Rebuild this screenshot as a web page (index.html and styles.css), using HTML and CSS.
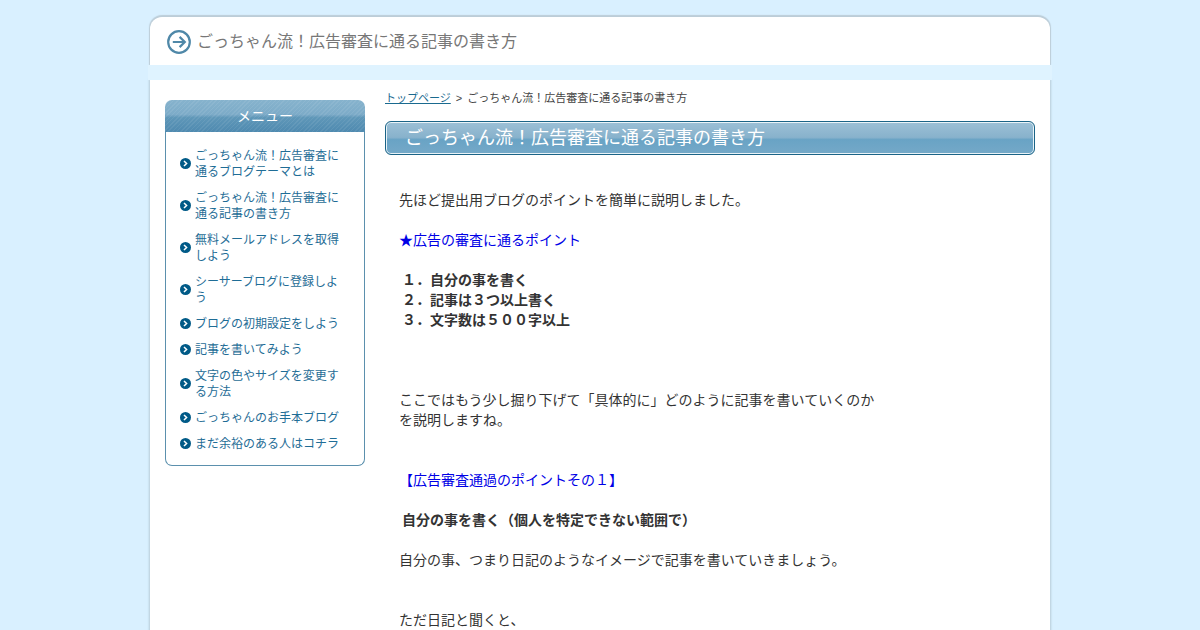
FILE: index.html
```html
<!DOCTYPE html>
<html lang="ja">
<head>
<meta charset="utf-8">
<title>ごっちゃん流！広告審査に通る記事の書き方</title>
<link rel="stylesheet" href="styles.css">
</head>
<body>
<div class="page">
  <header class="site-header">
    <svg class="header-icon" width="26" height="26" viewBox="0 0 26 26" aria-hidden="true">
      <circle cx="13" cy="13" r="10.8" fill="#fff" stroke="#4f88a8" stroke-width="2.2"/>
      <path d="M6.8 13H18.5M13.6 7.9L18.8 13L13.6 18.1" fill="none" stroke="#4f88a8" stroke-width="2.2"/>
    </svg>
    <a class="site-title">ごっちゃん流！広告審査に通る記事の書き方</a>
  </header>
  <div class="band"></div>
  <div class="columns">
    <aside class="sidebar">
      <h2 class="menu-title">メニュー</h2>
      <ul class="menu">
        <li><a>ごっちゃん流！広告審査に通るブログテーマとは</a></li>
        <li><a>ごっちゃん流！広告審査に通る記事の書き方</a></li>
        <li><a>無料メールアドレスを取得しよう</a></li>
        <li><a>シーサーブログに登録しよう</a></li>
        <li><a>ブログの初期設定をしよう</a></li>
        <li><a>記事を書いてみよう</a></li>
        <li><a>文字の色やサイズを変更する方法</a></li>
        <li><a>ごっちゃんのお手本ブログ</a></li>
        <li><a>まだ余裕のある人はコチラ</a></li>
      </ul>
    </aside>
    <main class="main">
      <div class="crumbs"><a class="crumb-link">トップページ</a><span class="crumb-sep">&gt;</span>ごっちゃん流！広告審査に通る記事の書き方</div>
      <h1 class="page-title">ごっちゃん流！広告審査に通る記事の書き方</h1>
      <div class="article">
        <p>先ほど提出用ブログのポイントを簡単に説明しました。<br><br>
        <span class="blue">★広告の審査に通るポイント</span><br><br></p>
        <p class="strong">１．自分の事を書く<br>２．記事は３つ以上書く<br>３．文字数は５００字以上</p>
        <p><br><br><br>
        ここではもう少し掘り下げて「具体的に」どのように記事を書いていくのか<br>を説明しますね。<br><br><br>
        <span class="blue">【広告審査通過のポイントその１】</span><br><br></p>
        <p class="strong">自分の事を書く（個人を特定できない範囲で）</p>
        <p><br>
        自分の事、つまり日記のようなイメージで記事を書いていきましょう。<br><br><br>
        ただ日記と聞くと、</p>
      </div>
    </main>
  </div>
</div>
</body>
</html>
```
FILE: styles.css
```css
html, body {
  margin: 0;
  height: 100%;
  overflow: hidden;
}
body {
  background: #d9f0ff;
  font-family: "Liberation Sans", "Noto Sans CJK JP", sans-serif;
  color: #333;
}
.page {
  width: 900px;
  margin: 0 auto;
  padding-top: 17px;
}
.site-header {
  height: 48px;
  box-sizing: border-box;
  background: #fff;
  border-radius: 12px 12px 0 0;
  box-shadow: 0 -1px 1px 1px #bccdd8;
  display: flex;
  align-items: center;
  padding: 2px 0 0 16px;
  gap: 5px;
}
.header-icon {
  flex: none;
}
.site-title {
  font-size: 16px;
  line-height: 22px;
  margin-top: -1px;
  color: #777;
}
.band {
  position: relative;
  z-index: 1;
  height: 15px;
  width: 904px;
  margin-left: -2px;
  background: #dff3ff;
}
.columns {
  background: #fff;
  box-shadow: 0 0 2px 1px #b8ccd8;
  display: flex;
  gap: 20px;
  padding: 20px 15px;
  min-height: 700px;
}
.sidebar {
  width: 200px;
  flex: none;
  align-self: flex-start;
}
.menu-title {
  margin: 0;
  height: 32px;
  line-height: 32px;
  text-align: center;
  font-size: 14px;
  font-weight: normal;
  color: #fff;
  border-radius: 7px 7px 0 0;
  background:
    repeating-linear-gradient(135deg, rgba(255,255,255,.07) 0 1px, transparent 1px 3px),
    linear-gradient(#86b3cd 0, #7dabc8 45%, #5f97b8 55%, #4f8ab0 100%);
}
.menu {
  list-style: none;
  margin: 0;
  padding: 16px 15px 13px 14px;
  border: 1px solid #5b90ad;
  border-top: 0;
  border-radius: 0 0 7px 7px;
  display: flex;
  flex-direction: column;
  gap: 10px;
}
.menu li {
  display: flex;
  align-items: center;
  gap: 4px;
  font-size: 12px;
  line-height: 16px;
}
.menu li::before {
  content: "";
  flex: none;
  width: 11px;
  height: 11px;
  margin-top: -2px;
  background: url("data:image/svg+xml,%3Csvg xmlns='http://www.w3.org/2000/svg' viewBox='0 0 11 11'%3E%3Ccircle cx='5.5' cy='5.5' r='5.5' fill='%23005a87'/%3E%3Cpath d='M4 3L6.6 5.5L4 8' fill='none' stroke='%23fff' stroke-width='1.5'/%3E%3C/svg%3E") no-repeat;
}
.menu a {
  color: #1f6d96;
}
.main {
  width: 650px;
  flex: none;
  margin-top: -10px;
}
.crumbs {
  font-size: 11px;
  line-height: 16px;
  margin-bottom: 15px;
  color: #444;
}
.crumb-link {
  color: #1a6a8f;
  text-decoration: underline;
}
.crumb-sep {
  margin: 0 5px;
}
.page-title {
  margin: 0;
  height: 34px;
  box-sizing: border-box;
  line-height: 32px;
  padding-left: 19px;
  font-size: 18px;
  font-weight: normal;
  color: #fff;
  border: 1px solid #1b6487;
  border-radius: 6px;
  box-shadow: inset 0 0 0 1px #e9f3f8;
  background: linear-gradient(#9cc0d6 0, #88b2cc 48%, #69a3c5 55%, #75a9c8 100%);
}
.article {
  padding: 35px 14px 0;
  font-size: 14px;
  line-height: 20px;
}
.article p {
  margin: 0;
}
.article .strong {
  padding-left: 3px;
  font-weight: bold;
}
.blue {
  color: #0000e6;
}
```
